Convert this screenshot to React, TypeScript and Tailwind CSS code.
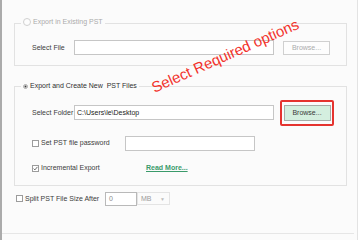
import React from "react";

function Check({ checked }: { checked?: boolean }) {
  return (
    <svg width="7" height="7" viewBox="0 0 7 7" className="shrink-0">
      <rect x="0.5" y="0.5" width="6" height="6" fill="#ffffff" stroke="#9c9c9c" strokeWidth="1" />
      {checked && <path d="M1.6 3.6 L2.9 4.9 L5.4 1.9" fill="none" stroke="#5a5a5a" strokeWidth="0.9" />}
    </svg>
  );
}

export default function App() {
  return (
    <div className="w-[360px] h-[240px] bg-white overflow-hidden">
      <div className="relative w-[358px] h-[240px] bg-[#fbfbfb] border-l-2 border-r border-l-[#ababab] border-r-[#e3e3e3] flex flex-col pl-[12px] pt-[17px] font-['Liberation_Sans',Arial,sans-serif] text-[7px] leading-[10px] text-[#3c3c3c]">
        {/* Group 1 */}
        <fieldset className="w-[333px] border border-[#e2e2e2] pl-[6px] pt-[11px] pb-[10px]">
          <legend className="pl-[2px] pr-[2px]">
            <span className="inline-flex items-center gap-[2px] text-[#ababab]">
              <svg width="8" height="8" viewBox="0 0 8 8" className="shrink-0">
                <circle cx="4" cy="4" r="3.5" fill="#fdfdfd" stroke="#cfcfcf" strokeWidth="1" />
              </svg>
              <span>Export in Existing PST</span>
            </span>
          </legend>
          <div className="flex items-center ml-[11px] h-[15px]">
            <span className="w-[42px] shrink-0">Select File</span>
            <div className="w-[200px] h-[15px] border border-[#c6c6c6] bg-white shrink-0" />
            <div className="ml-[9px] w-[47px] h-[14px] border border-[#d0d0d0] bg-[#fdfdfd] text-[#acacac] flex items-center justify-center shrink-0">
              Browse...
            </div>
          </div>
        </fieldset>

        {/* Group 2 */}
        <fieldset className="mt-[15px] w-[333px] border border-[#e2e2e2] pl-[6px] pt-[8px] pb-[9px]">
          <legend className="pl-[2px] pr-[2px]">
            <span className="inline-flex items-center gap-[2px] text-[#303030]">
              <svg width="5" height="5" viewBox="0 0 5 5" className="shrink-0">
                <circle cx="2.5" cy="2.5" r="2" fill="#f4f4f4" stroke="#9a9a9a" strokeWidth="0.8" />
                <circle cx="2.5" cy="2.5" r="1" fill="#3a3a3a" />
              </svg>
              <span>Export and Create New&nbsp; PST Files</span>
            </span>
          </legend>
          <div className="flex items-center ml-[11px] h-[26px]">
            <span className="w-[42px] shrink-0">Select Folder</span>
            <div className="w-[200px] h-[15px] border border-[#c6c6c6] bg-white shrink-0 flex items-center pl-[2px] text-[#222222]">
              C:\Users\le\Desktop
            </div>
            <div className="ml-[6px] w-[54px] h-[26px] border-2 border-[#e5332f] rounded-[2px] flex items-center justify-center shrink-0">
              <div className="w-[47px] h-[16px] border border-[#a6aea9] bg-[#d4efdf] text-[#3a3a3a] flex items-center justify-center">
                Browse...
              </div>
            </div>
          </div>
          <div className="flex items-center ml-[11px] mt-[10px] h-[15px]">
            <div className="w-[93px] flex items-center gap-[2px] shrink-0">
              <Check />
              <span>Set PST file password</span>
            </div>
            <div className="w-[130px] h-[15px] border border-[#c6c6c6] bg-white shrink-0" />
          </div>
          <div className="flex items-center ml-[11px] mt-[10px] h-[15px]">
            <div className="w-[93px] flex items-center gap-[2px] shrink-0">
              <Check checked />
              <span>Incremental Export</span>
            </div>
            <span className="ml-[21px] font-bold underline text-[#3a9a6a]">Read More...</span>
          </div>
        </fieldset>

        {/* Split row */}
        <div className="flex items-center mt-[6px] ml-[2px] h-[14px]">
          <div className="w-[89px] flex items-center gap-[2px] shrink-0">
            <Check />
            <span>Split PST File Size After</span>
          </div>
          <div className="w-[32px] h-[14px] border border-[#b9b9b9] bg-white text-[#8a8a8a] flex items-center pl-[3px] shrink-0">
            0
          </div>
          <div className="w-[33px] h-[13px] border border-[#e4e4e4] text-[#9a9a9a] flex items-center justify-between pl-[3px] pr-[4px] shrink-0">
            <span>MB</span>
            <span className="text-[5px] text-[#bdbdbd]">▼</span>
          </div>
        </div>

        {/* bottom separator */}
        <div className="mt-auto mb-[6px] -ml-[12px] w-[352px] h-px bg-[#e6e6e6]" />

        {/* annotation */}
        <div className="absolute left-[143px] top-[47px] w-[160px] h-[17px] leading-[17px] text-[15px] text-[#f2322b] whitespace-nowrap text-center rotate-[-24deg] font-['Liberation_Sans',Arial,sans-serif]">
          Select Required options
        </div>
      </div>
    </div>
  );
}
